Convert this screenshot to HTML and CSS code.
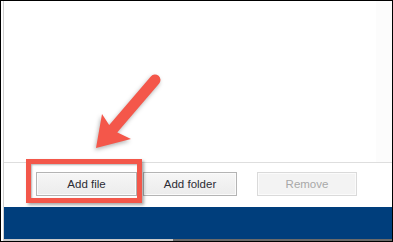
FILE: index.html
```html
<!DOCTYPE html>
<html lang="en">
<head>
    <meta charset="UTF-8">
    <meta name="viewport" content="width=device-width, initial-scale=1.0">
    <title>Add file</title>
    <link rel="stylesheet" href="styles.css">
</head>
<body>
    <div class="frame">
        <div class="window">
            <div class="content"></div>
            <div class="buttons">
                <button class="btn btn-file">Add file</button>
                <button class="btn btn-folder">Add folder</button>
                <button class="btn btn-remove" disabled>Remove</button>
            </div>
            <div class="status-bar"></div>
            <div class="bottom-line"></div>
        </div>

        <!-- annotation -->
        <div class="highlight"></div>
        <svg class="arrow" viewBox="0 0 393 242" width="393" height="242">
            <line x1="155" y1="80" x2="113" y2="129" stroke="#f4574a" stroke-width="11" stroke-linecap="round"/>
            <path d="M96 148 L102 114 L109.5 125.5 L117.5 132.5 L131 139 Z" fill="#f4574a"/>
        </svg>
    </div>
</body>
</html>
```

FILE: styles.css
```css
* {
    margin: 0;
    padding: 0;
    box-sizing: border-box;
}

body {
    background: #fff;
    font-family: 'Liberation Sans', Arial, sans-serif;
}

.frame {
    position: relative;
    width: 393px;
    height: 242px;
    border: 1px solid #000;
    background: #fff;
    display: flex;
}

.window {
    flex: 1;
    margin-left: 2px;
    border-left: 1px solid #cfcfcf;
    display: flex;
    flex-direction: column;
}

.content {
    height: 162px;
    border-bottom: 1px solid #dedede;
    background: linear-gradient(to right, #fff 372px, #fcfcfc 372px);
}

.buttons {
    height: 44px;
    display: flex;
    align-items: flex-start;
    padding: 9px 0 0 32px;
}

.btn {
    height: 24px;
    border: 1px solid #b4b4b4;
    background: linear-gradient(#f6f6f6, #ececec);
    font-family: 'Liberation Sans', Arial, sans-serif;
    font-size: 11.5px;
    color: #2c2c34;
    box-shadow: inset 0 0 0 1px #fbfbfb;
}

.btn-file {
    width: 101px;
}

.btn-folder {
    width: 94px;
    margin-left: 6px;
}

.btn-remove {
    width: 100px;
    margin-left: 20px;
    color: #a8a8a8;
    border-color: #dadada;
    background: #f3f3f3;
}

.status-bar {
    height: 32px;
    background: #003e7c;
}

.bottom-line {
    height: 2px;
    background: linear-gradient(to right, #c9c9c9 169px, #6a6a6a 169px);
}

.highlight {
    position: absolute;
    left: 25px;
    top: 158px;
    width: 116px;
    height: 44px;
    border: 5px solid #f3574a;
    box-shadow: 2px 2px 3px rgba(0, 0, 0, 0.35), inset 1px 1px 2px rgba(0, 0, 0, 0.3);
}

.arrow {
    position: absolute;
    left: -1px;
    top: -1px;
    filter: drop-shadow(-1px 2px 2px rgba(0, 0, 0, 0.3));
}
```
